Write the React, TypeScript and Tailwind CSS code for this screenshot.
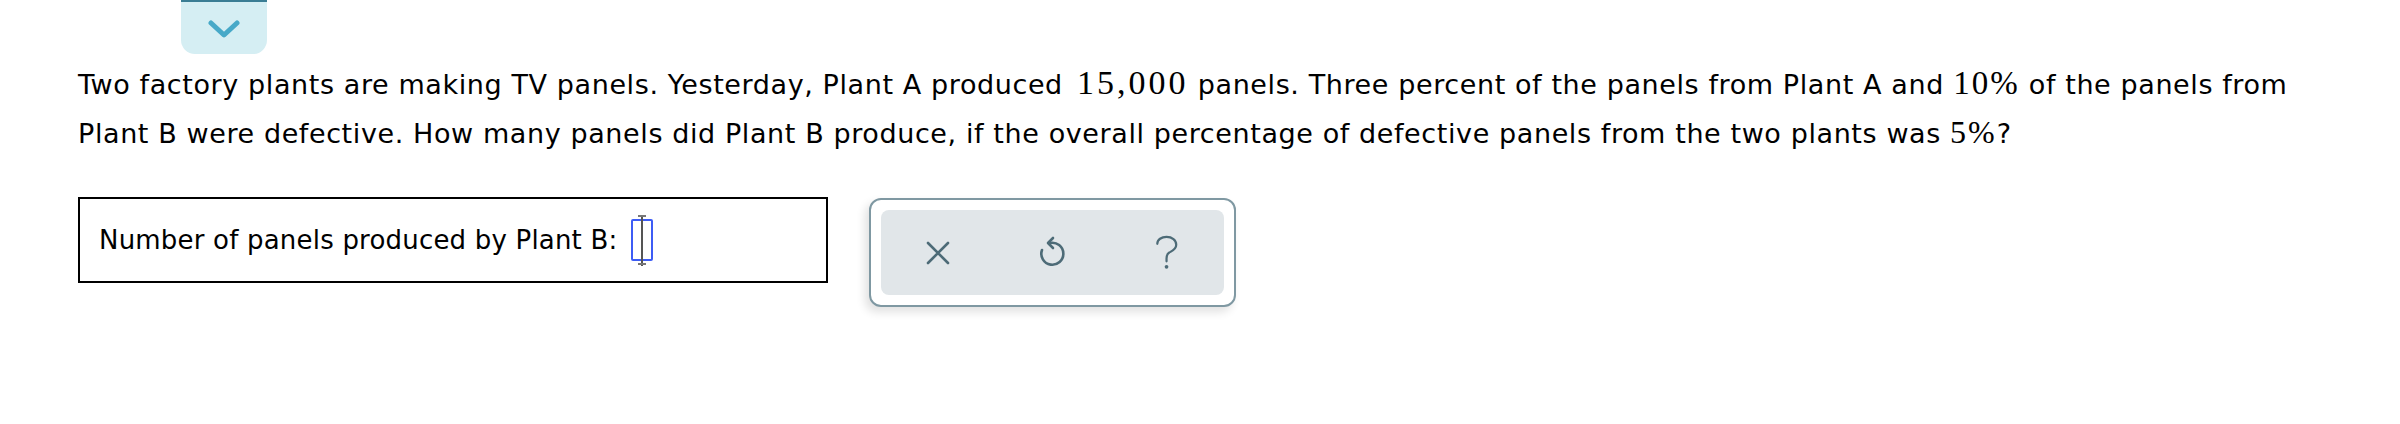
export default function App() {
  return (
    <div className="min-h-[424px] w-full bg-white font-['DejaVu_Sans',sans-serif] text-black">
      {/* collapse tab */}
      <div className="ml-[181px] flex h-[54px] w-[86px] flex-col rounded-b-[14px] bg-[#d5eef3]">
        <div className="h-[2px] w-full bg-[#3a7d94]" />
        <div className="flex flex-1 items-center justify-center">
          <svg width="32" height="20" viewBox="0 0 32 20" className="mt-[4px]">
            <path d="M3 3 L16 15 L29 3" fill="none" stroke="#47a9c8" strokeWidth="5" strokeLinecap="round" strokeLinejoin="round" />
          </svg>
        </div>
      </div>

      <div className="px-[78px]">
        {/* question */}
        <p className="mt-[6px] text-[27px] leading-[49px] tracking-[0.6px] whitespace-nowrap">
          Two factory plants are making TV panels. Yesterday, Plant A produced{" "}
          <span className="ml-[5px] font-['Liberation_Serif',serif] text-[34px] leading-none tracking-[3px]">15,000</span> panels. Three percent of
          the panels from Plant A and{" "}
          <span className="font-['Liberation_Serif',serif] text-[33px] leading-none tracking-[2px]">10%</span> of the panels from
          <br />
          Plant B were defective. How many panels did Plant B produce, if the overall percentage of defective panels from
          the two plants was <span className="font-['Liberation_Serif',serif] text-[32px] leading-none tracking-[2px]">5%</span>?
        </p>

        <div className="mt-[39px] flex items-start gap-[41px]">
          {/* answer box */}
          <div className="flex h-[86px] w-[750px] shrink-0 items-center gap-[14px] whitespace-nowrap border-2 border-black pl-[19px] text-[26px] tracking-[0.2px]">
            <span>Number of panels produced by Plant B:</span>
            <div className="relative h-[42px] w-[22px] shrink-0 rounded-[2px] border-2 border-[#3d5cf5]">
              <div className="absolute left-1/2 top-[-5px] h-[50px] w-[2px] -translate-x-1/2 bg-[#555]" />
              <div className="absolute left-1/2 top-[-6px] h-[2px] w-[8px] -translate-x-1/2 bg-[#777]" />
              <div className="absolute bottom-[-6px] left-1/2 h-[2px] w-[8px] -translate-x-1/2 bg-[#777]" />
            </div>
          </div>

          {/* tools */}
          <div className="mt-[1px] h-[109px] w-[367px] shrink-0 rounded-[12px] border-2 border-[#7f98a2] bg-white p-[10px] shadow-[-4px_5px_10px_rgba(0,0,0,0.12)]">
            <div className="grid h-full grid-cols-3 items-center rounded-[8px] bg-[#e1e6e9] text-[#4d6b77]">
              <div className="flex justify-center">
                <svg width="26" height="26" viewBox="0 0 26 26">
                  <path d="M3 3 L23 23 M23 3 L3 23" stroke="currentColor" strokeWidth="2.6" strokeLinecap="round" fill="none" />
                </svg>
              </div>
              <div className="flex justify-center">
                <svg width="28" height="34" viewBox="0 0 28 34">
                  <path
                    d="M12 7 A11 11 0 1 1 4 14"
                    stroke="currentColor"
                    strokeWidth="2.6"
                    strokeLinecap="round"
                    fill="none"
                  />
                  <path d="M15 2 L10 7 L15 12" stroke="currentColor" strokeWidth="2.6" strokeLinecap="round" strokeLinejoin="round" fill="none" />
                </svg>
              </div>
              <div className="flex justify-center">
                <svg width="24" height="36" viewBox="0 0 26 38">
                  <path
                    d="M2.5 9 C2.5 4.5 7 1.5 12.5 1.5 C18.5 1.5 23 5 23 10 C23 15 19 16.5 15.5 18.5 C13 20 12.5 22 12.5 25 L12.5 28"
                    stroke="currentColor"
                    strokeWidth="2.4"
                    strokeLinecap="round"
                    fill="none"
                  />
                  <circle cx="12.5" cy="34" r="2" fill="currentColor" />
                </svg>
              </div>
            </div>
          </div>
        </div>
      </div>
    </div>
  )
}
